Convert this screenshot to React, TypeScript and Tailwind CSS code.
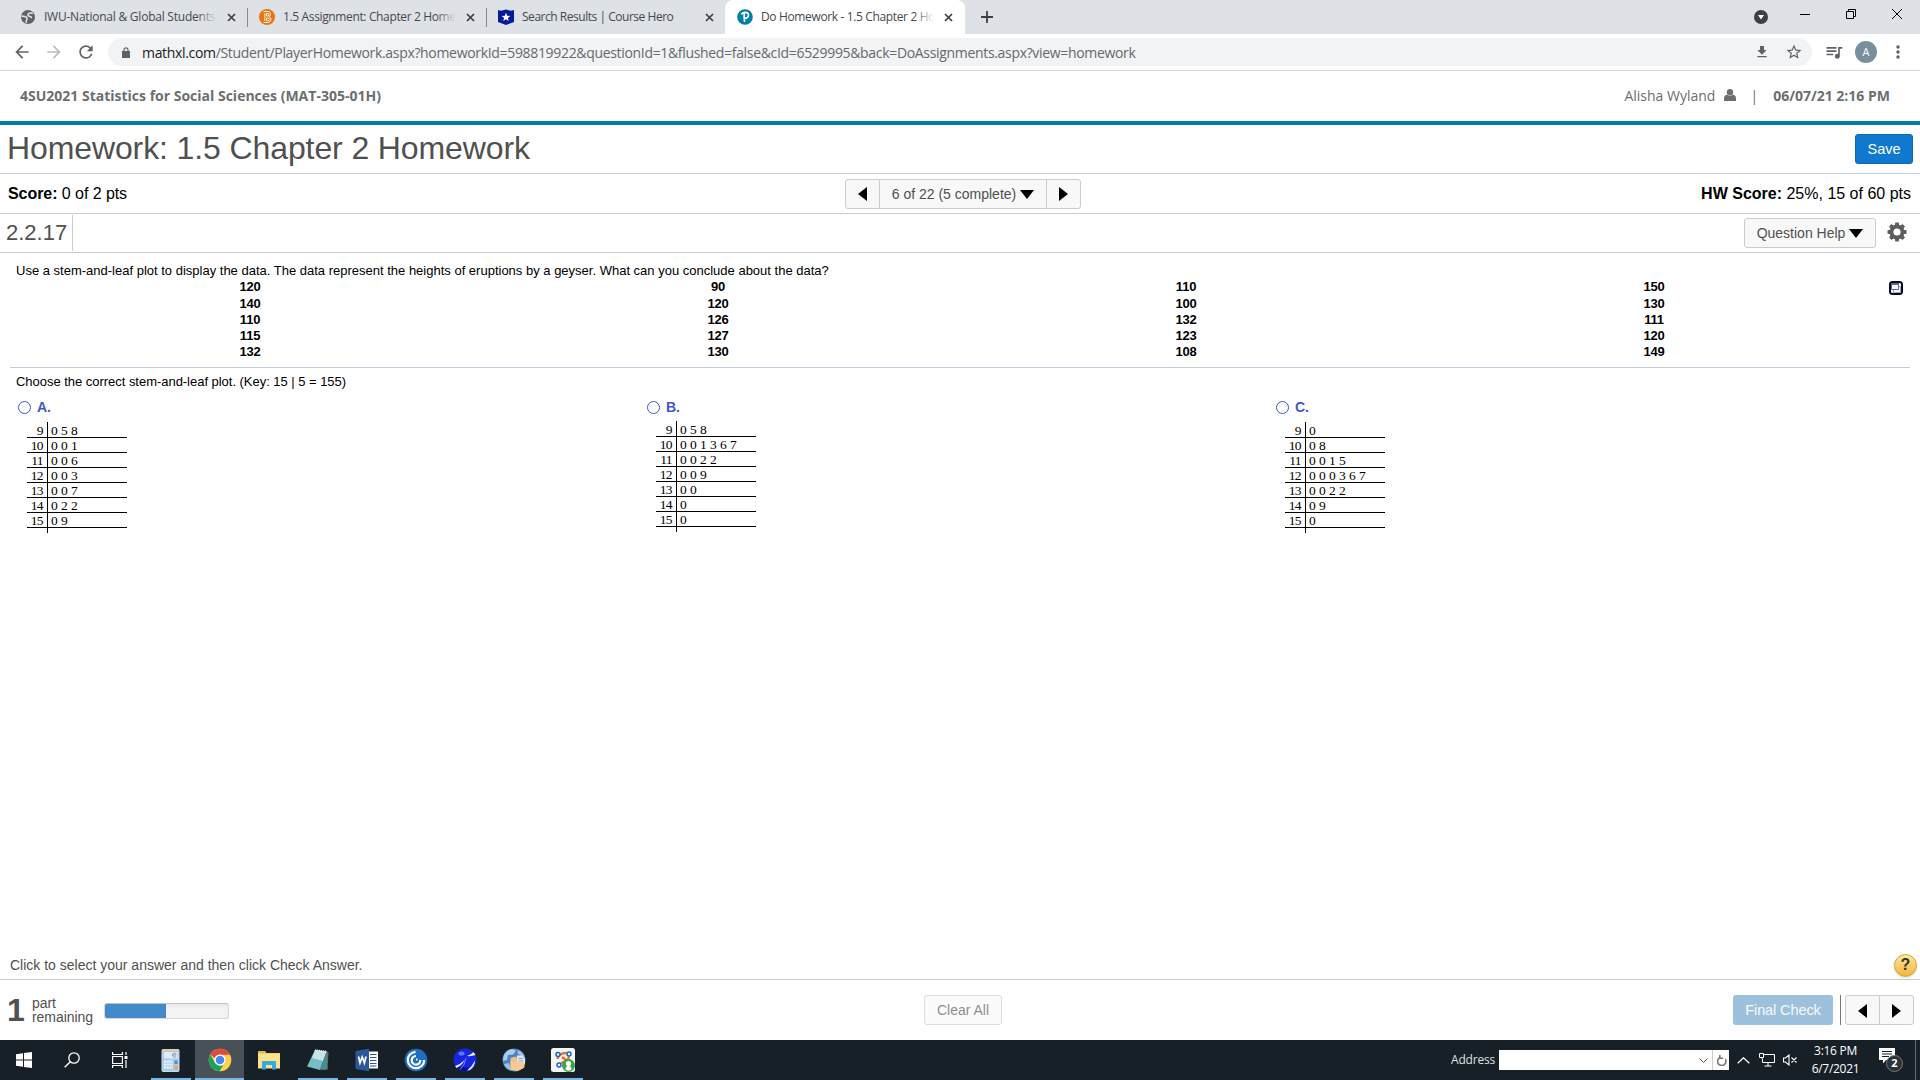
import React from 'react';
import { MdDownload, MdStarBorder, MdQueueMusic, MdMoreVert, MdRefresh, MdArrowBack, MdArrowForward } from 'react-icons/md';

const UI = 'font-["Open_Sans",sans-serif]';

function Close({ className = '' }: { className?: string }) {
  return (
    <svg className={`size-[9px] shrink-0 ${className}`} viewBox="0 0 9 9">
      <path d="M1 1L8 8M8 1L1 8" stroke="#3c4043" strokeWidth="1.7" />
    </svg>
  );
}

function TabTitle({ children, fade, tracking }: { children: React.ReactNode; fade: string; tracking: string }) {
  return (
    <div className={`relative ml-2 w-[173px] overflow-hidden text-[12px] leading-[16px] whitespace-nowrap text-[#45494d] ${tracking}`}>
      {children}
      <div className={`absolute inset-y-0 right-0 w-5 bg-gradient-to-r from-transparent ${fade}`} />
    </div>
  );
}

function Globe() {
  return (
    <svg className="size-4" viewBox="0 0 16 16">
      <circle cx="8" cy="8" r="7" fill="#5f6368" />
      <path d="M13 4.200c-2 .3-2.500-.7-4.200.2-1.500 1-.8 2.800.8 2.800 1.200 0 1.200 1.300 2.400 1.300M1.500 7.200c1.300-.2 2.500.2 3.800.5 1.500.5 2.200 1.200 1.500 2.600-.4 1-.8 2-.5 3.500" fill="none" stroke="#dee1e6" strokeWidth="1.600" />
    </svg>
  );
}

function BrightIcon() {
  return (
    <svg className="size-4" viewBox="0 0 16 16">
      <circle cx="8" cy="8" r="8" fill="#e87511" />
      <path d="M4.500 2.500h4.500c3 0 3.200 4 1 5.200 3 1 2.400 5.800-1.200 5.800h-4.300M5.800 4.300v7.700M7.500 4.500h1.500c1.400 0 1.400 2.500 0 2.500h-1.500zM7.500 9h1.700c1.500 0 1.500 2.800 0 2.800h-1.700z" fill="none" stroke="#fff" strokeWidth=".9" />
    </svg>
  );
}

function HeroIcon() {
  return (
    <svg className="size-4" viewBox="0 0 16 16">
      <path d="M0 1l3 .8L8 .5l5 1.300 3-.8v12l-8 3-8-3z" fill="#061b9c" />
      <path d="M8 3.800l1.200 2.900 3.100.2-2.400 2 .8 3L8 10.200l-2.700 1.700.8-3-2.400-2 3.100-.2z" fill="#fff" />
    </svg>
  );
}

function PearsonIcon() {
  return (
    <svg className="size-4" viewBox="0 0 16 16">
      <circle cx="8" cy="8" r="7.800" fill="#007fa3" />
      <path d="M4.500 5.500C5.500 3 11.500 2.300 11.500 6c0 2.600-2.500 3.500-4 3.100M7.300 4.200c-.4 3-.3 5.500.3 8.600" fill="none" stroke="#fff" strokeWidth="1.700" />
    </svg>
  );
}

function TabStrip() {
  return (
    <div className={`flex h-[34px] bg-[#dee1e6] ${UI}`}>
      <div className="flex w-[247px] items-center pl-5">
        <Globe />
        <TabTitle fade="to-[#dee1e6]" tracking="tracking-[-0.23px]">IWU-National &amp; Global Students</TabTitle>
        <Close className="ml-[10px]" />
      </div>
      <div className="mt-[8px] h-[19px] w-px bg-[#858a8f]" />
      <div className="flex w-[238px] items-center pl-[11px]">
        <BrightIcon />
        <TabTitle fade="to-[#dee1e6]" tracking="tracking-[-0.36px]">1.5 Assignment: Chapter 2 Home</TabTitle>
        <Close className="ml-[10px]" />
      </div>
      <div className="mt-[8px] h-[19px] w-px bg-[#858a8f]" />
      <div className="flex w-[238px] items-center pl-[11px]">
        <HeroIcon />
        <TabTitle fade="to-[#dee1e6]" tracking="tracking-[-0.47px]">Search Results | Course Hero</TabTitle>
        <Close className="ml-[10px]" />
      </div>
      <div className="flex w-[240px] items-center rounded-t-lg bg-white pl-3">
        <PearsonIcon />
        <TabTitle fade="to-white" tracking="tracking-[-0.36px]">Do Homework - 1.5 Chapter 2 Ho</TabTitle>
        <Close className="ml-[10px]" />
      </div>
      <svg className="mt-[11px] ml-[16px] size-3" viewBox="0 0 12 12">
        <path d="M6 0v12M0 6h12" stroke="#3c4043" strokeWidth="1.800" />
      </svg>
      <div className="ml-auto flex">
        <svg className="mt-[10px] size-[14px]" viewBox="0 0 14 14">
          <circle cx="7" cy="7" r="7" fill="#3c4043" />
          <path d="M4 5h6L7 9.500z" fill="#fff" />
        </svg>
        <div className="mt-[14px] ml-[32px] h-px w-[10px] bg-black" />
        <svg className="mt-[9px] ml-[36px] size-[10px]" viewBox="0 0 10 10">
          <path d="M.5 2.500h7v7h-7zM2.500 2.500v-2h7v7h-2" fill="none" stroke="#000" />
        </svg>
        <svg className="mt-[9px] mr-[18px] ml-[36px] size-[10px]" viewBox="0 0 10 10">
          <path d="M0 0L10 10M10 0L0 10" stroke="#000" />
        </svg>
      </div>
    </div>
  );
}

function Toolbar() {
  return (
    <div className={`flex h-[37px] items-center border-b border-[#d6d7da] bg-white ${UI}`}>
      <MdArrowBack className="ml-[12px] size-5 text-[#5f6368]" />
      <MdArrowForward className="ml-[12px] size-5 text-[#babcbe]" />
      <MdRefresh className="ml-[12px] size-5 text-[#5f6368]" />
      <div className="ml-[12px] flex h-7 w-[1704px] items-center rounded-full bg-[#f1f3f4]">
        <svg className="ml-[14px] h-[11px] w-2" viewBox="0 0 8 11">
          <path d="M0 4h8v7H0z" fill="#5f6368" />
          <path d="M2 4.500V2.800a2 2 0 0 1 4 0V4.500" fill="none" stroke="#5f6368" strokeWidth="1.200" />
        </svg>
        <div className="ml-[12px] text-[14px] tracking-[-0.325px] whitespace-nowrap text-[#66696d]">
          <span className="text-[#202124]">mathxl.com</span>
          /Student/PlayerHomework.aspx?homeworkId=598819922&amp;questionId=1&amp;flushed=false&amp;cId=6529995&amp;back=DoAssignments.aspx?view=homework
        </div>
        <MdDownload className="ml-auto size-4 text-[#5f6368]" />
        <MdStarBorder className="mr-[9px] ml-[15px] size-[18px] text-[#5f6368]" />
      </div>
      <MdQueueMusic className="ml-[12px] size-5 text-[#5f6368]" />
      <div className="ml-[11px] flex size-[22px] items-center justify-center rounded-full bg-[#78909c] text-[11px] text-white">A</div>
      <MdMoreVert className="ml-[11px] size-5 text-[#5f6368]" />
    </div>
  );
}

function Triangle({ dir }: { dir: 'left' | 'right' | 'down' }) {
  if (dir === 'down')
    return (
      <svg className="mt-px h-[9px] w-[14px] shrink-0" viewBox="0 0 14 9">
        <path d="M0 0H14L7 9z" />
      </svg>
    );
  return (
    <svg className="h-[14px] w-[9px] shrink-0" viewBox="0 0 9 14">
      <path d={dir === 'left' ? 'M9 0V14L0 7z' : 'M0 0V14L9 7z'} />
    </svg>
  );
}

function Gear() {
  return (
    <svg className="mb-[2px] ml-[11px] size-5" viewBox="0 0 20 20">
      <circle cx="10" cy="10" r="5.500" fill="none" stroke="#5d5d5d" strokeWidth="3.800" />
      {[0, 45, 90, 135, 180, 225, 270, 315].map((a) => (
        <path key={a} d="M7.700 4L8.300.5h3.400L12.300 4z" fill="#5d5d5d" transform={`rotate(${a} 10 10)`} />
      ))}
    </svg>
  );
}

const columns = [
  [120, 140, 110, 115, 132],
  [90, 120, 126, 127, 130],
  [110, 100, 132, 123, 108],
  [150, 130, 111, 120, 149],
];

const plots = [
  { label: 'A.', pad: 'pt-[7px]', leaves: ['058', '001', '006', '003', '007', '022', '09'] },
  { label: 'B.', pad: 'pt-[6px]', leaves: ['058', '001367', '0022', '009', '00', '0', '0'] },
  { label: 'C.', pad: 'pt-[7px]', leaves: ['0', '08', '0015', '000367', '0022', '09', '0'] },
];

function StemLeaf({ leaves }: { leaves: string[] }) {
  return (
    <div className="relative ml-[17px] w-[100px] pt-px pb-[5px] font-['Liberation_Serif',serif] text-[13.5px] leading-[14px] text-black">
      {leaves.map((row, i) => (
        <div key={i} className="flex h-[15px] border-b border-black pt-px">
          <div className="w-4 text-right tracking-[-0.6px]">{9 + i}</div>
          <div className="ml-2 flex tracking-[-0.5px]">
            {row.split('').map((d, j) => (
              <span key={j} className="w-[10px]">{d}</span>
            ))}
          </div>
        </div>
      ))}
      <div className="absolute inset-y-0 left-5 w-px bg-black" />
    </div>
  );
}

function Homework() {
  return (
    <div className="flex h-[969px] flex-col bg-white font-['Liberation_Sans',Arial,sans-serif] text-black">
      <div className={`flex h-[50px] items-center pr-[30px] pb-[2px] pl-5 text-[14px] text-[#6a7070] ${UI}`}>
        <div className="font-bold">4SU2021 Statistics for Social Sciences (MAT-305-01H)</div>
        <div className="ml-auto">Alisha Wyland</div>
        <svg className="ml-[9px] size-3" viewBox="0 0 12 12" fill="#6a7070">
          <circle cx="6" cy="3.200" r="3.200" />
          <path d="M0 12V9.500C0 7 1.500 6 3 5.800c2 1.400 4 1.400 6 0 1.500.2 3 1.200 3 3.700V12z" />
        </svg>
        <div className="ml-[14px]">|</div>
        <div className="ml-[15px] font-bold">06/07/21 2:16 PM</div>
      </div>
      <div className="h-1 bg-[#007fa3]" />
      <div className="flex h-[49px] items-center border-b border-[#c7cadc] pr-[7px] pl-[7px]">
        <h1 className="pb-[2px] text-[32px] leading-[36px] tracking-[-0.11px] whitespace-nowrap text-[#505050]">Homework: 1.5 Chapter 2 Homework</h1>
        <button className="ml-auto h-[30px] w-[58px] rounded-[3px] border border-[#0b69b5] bg-[#0f79d0] pt-px text-[14.5px] text-white">Save</button>
      </div>
      <div className="grid h-10 grid-cols-[837px_236px_1fr] items-center border-b border-[#c7cadc] pr-[9px] pl-[8px] text-[16px]">
        <div className="tracking-[-0.06px]"><b>Score:</b> 0 of 2 pts</div>
        <div className="flex h-[30px] rounded-[3px] border border-[#ccc] bg-[#f8f8f8] text-[14px]">
          <div className="flex w-[34px] items-center justify-center border-r border-[#ccc] pt-px"><Triangle dir="left" /></div>
          <div className="flex grow items-center justify-center gap-1 pt-px"><span className="text-[#505050]">6 of 22 (5 complete)</span><Triangle dir="down" /></div>
          <div className="flex w-[34px] items-center justify-center border-l border-[#ccc] pt-px"><Triangle dir="right" /></div>
        </div>
        <div className="text-right"><b>HW Score:</b> 25%, 15 of 60 pts</div>
      </div>
      <div className="flex h-[39px] items-center border-b border-[#c7cadc] pr-[13px]">
        <div className="flex h-9 w-[73px] items-center border-r border-[#c7cadc] pb-[2px] pl-[6px] text-[22px] text-[#505050]">2.2.17</div>
        <button className="ml-auto flex h-[30px] w-[132px] items-center justify-center gap-1 rounded-[3px] border border-[#ccc] bg-[#f8f8f8] text-[14px]">
          <span className="text-[#505050]">Question Help</span><Triangle dir="down" />
        </button>
        <Gear />
      </div>
      <div className="pt-[10px] pl-4 text-[13px] leading-[16px]">Use a stem-and-leaf plot to display the data. The data represent the heights of eruptions by a geyser. What can you conclude about the data?</div>
      <div className="mx-[10px] flex h-[89px] border-b border-[#c7cadc] pl-[6px] text-[13px] leading-[16px] font-bold tracking-[-0.2px]">
        {columns.map((c, i) => (
          <div key={i} className="w-[468px] shrink-0 text-center">
            {c.map((v, j) => <div key={j} className="h-4 first:h-[17px]">{v}</div>)}
          </div>
        ))}
        <svg className="mt-[2px] ml-px size-[14px] shrink-0" viewBox="0 0 14 14">
          <rect x="1" y="1" width="12" height="12" rx="2.500" fill="#fff" stroke="#0c0c18" strokeWidth="2" />
          <path d="M4.500 9v2.500h7V5.500H10" fill="none" stroke="#a3a8da" />
          <path d="M2.500 3v5.500h7V3" fill="none" stroke="#5961b5" />
          <path d="M2 2h8v2H2z" fill="#5961b5" />
        </svg>
      </div>
      <div className="pt-[6px] pl-4 text-[13px] leading-[16px] tracking-[-0.03px]">Choose the correct stem-and-leaf plot. (Key: 15 | 5 = 155)</div>
      <div className="flex pt-[9px] pl-[10px]">
        {plots.map((p) => (
          <div key={p.label} className="w-[629px]">
            <div className="flex h-4 items-center gap-[6px] pl-2">
              <div className="size-[13px] rounded-full border border-[#3d55cc]" />
              <span className="text-[14px] font-bold text-[#4059c9]">{p.label}</span>
            </div>
            <div className={p.pad}><StemLeaf leaves={p.leaves} /></div>
          </div>
        ))}
      </div>
      <div className="mt-auto flex h-[29px] items-center border-b border-[#c7cadc] pr-[3px] pl-[10px] text-[14px] text-[#505050]">
        Click to select your answer and then click Check Answer.
        <div className="ml-auto flex size-[23px] items-center justify-center rounded-full border border-[#c9a64a] bg-gradient-to-b from-[#ffe693] to-[#f2b535] text-[16px] font-bold text-[#333] shadow-sm">?</div>
      </div>
      <div className="flex h-[60px] shrink-0 items-center pr-[6px] text-[#505050]">
        <div className="w-8 pl-[7px] text-[32px] leading-[32px] font-bold">1</div>
        <div className="w-[72px] text-[14px] leading-[14px] tracking-[-0.05px]">part<br />remaining</div>
        <div className="mt-[2px] h-4 w-[125px] overflow-hidden rounded-[3px] border border-[#d8d8d8] border-t-[#c0c0c0] bg-[#f4f4f4] shadow-inner">
          <div className="-mt-px -ml-px h-4 w-[62px] bg-[#428bca]" />
        </div>
        <button className="ml-[695px] h-[30px] w-[78px] rounded-[3px] border border-[#ddd] bg-[#fbfbfb] text-[14px] text-[#8f8f8f]">Clear All</button>
        <button className="ml-auto h-[30px] w-[100px] rounded-[3px] bg-[#9dc0dc] pt-px text-[14.5px] tracking-[-0.1px] text-white/90">Final Check</button>
        <div className="ml-[7px] h-[30px] w-px bg-[#777]" />
        <div className="ml-[4px] flex h-[30px] w-[69px] rounded-[3px] border border-[#ccc] bg-[#f8f8f8] text-black">
          <div className="flex w-[34px] items-center justify-center border-r border-[#ccc] pt-px"><Triangle dir="left" /></div>
          <div className="flex grow items-center justify-center pt-px"><Triangle dir="right" /></div>
        </div>
      </div>
    </div>
  );
}

function TaskbarApp({ children, open = true, active = false }: { children: React.ReactNode; open?: boolean; active?: boolean }) {
  return (
    <div className={`flex h-10 w-[49px] flex-col items-center ${active ? 'bg-[#485157]' : ''}`}>
      <svg className="mt-[8px] size-6" viewBox="0 0 24 24">{children}</svg>
      <div className={`mt-[6px] h-[2px] ${active ? 'w-full' : 'w-10'} ${open ? 'bg-[#76b9ed]' : ''}`} />
    </div>
  );
}

function Taskbar() {
  return (
    <div className={`flex h-10 bg-[#182027] text-white ${UI}`}>
      <div className="flex w-[146px] items-center">
        <svg className="ml-4 size-4" viewBox="0 0 16 16"><path d="M0 2.300L7 1.300v6.200H0zM8 1.100L16 0v7.500H8zM0 8.500h7v6.200L0 13.700zM8 8.500h8V16L8 14.900z" fill="#fff" /></svg>
        <svg className="ml-8 size-4" viewBox="0 0 16 16"><path d="M6.300 9.700L.7 15.300" stroke="#fff" strokeWidth="1.400" /><circle cx="10" cy="6" r="5.200" fill="none" stroke="#fff" strokeWidth="1.300" /></svg>
        <svg className="ml-8 size-4" viewBox="0 0 16 16"><path d="M.6 0v2.500h9.800V0M.6 4.500h9.800v7H.6zM.6 16v-2.500h9.800V16M14 0v3M14 8v8" fill="none" stroke="#fff" strokeWidth="1.200" /><path d="M12.500 4h3v3h-3z" fill="#fff" /></svg>
      </div>
      <TaskbarApp>
        <rect x="3" y="1.500" width="17" height="22" rx="1" fill="#a9cbe6" stroke="#c4dcf0" />
        <path d="M3.500 1.500h16v1.500h-16z" fill="#f3c77c" />
        <rect x="5" y="4" width="13.500" height="6.500" fill="#dcebf7" />
        <path d="M13.500 7h3.500c0-2.500-3.500-2.500-3.500 0s2.500 2.500 3.500 1.500" fill="none" stroke="#7a95b5" />
        <path d="M5 13.500h9M5 16.500h9M5 19.500h9" stroke="#f5faff" strokeWidth="1.800" strokeDasharray="2 .8" />
        <path d="M15.500 12.500h3v3.500h-3z" fill="#3d93d6" /><path d="M15.500 17.500h3v4h-3z" fill="#f0a640" />
      </TaskbarApp>
      <TaskbarApp active>
        <circle cx="12" cy="12" r="11.300" fill="#fdd04f" />
        <path d="M2.200 6.300A11.300 11.300 0 0 1 22 6.700H12a5.800 5.800 0 0 0-5.300 3.600z" fill="#df4a3c" />
        <path d="M2.200 6.300L7 15l5 2.700 3.300-.4L11.500 23.300A11.300 11.300 0 0 1 2.200 6.300z" fill="#1fa15d" />
        <circle cx="12" cy="12" r="5.600" fill="#fff" /><circle cx="12" cy="12" r="4.300" fill="#4587f3" />
      </TaskbarApp>
      <TaskbarApp open={false}>
        <path d="M1 3h7l1.500 2H23v3H1z" fill="#e9b84a" /><path d="M1 5.500h22v15H1z" fill="#fde28e" />
        <path d="M5 21.500V14q0-1 1-1h12q1 0 1 1v7.500h-4V17H9v4.500z" fill="#35aae1" />
      </TaskbarApp>
      <TaskbarApp>
        <path d="M20 3l2.500 1.500L21.500 21.500 17 22z" fill="#6f6d58" />
        <path d="M9 2L20.500 3.500 14 22 1 18.500z" fill="#78bcc4" /><path d="M9 2L20.500 3.500 17 13 6 10z" fill="#c5e6e8" /><path d="M14 22L20.500 3.500 21.300 21z" fill="#4e8a94" />
        <path d="M9 2l12 1.700" stroke="#e6efef" strokeWidth="1.600" strokeDasharray="1.200 .8" />
      </TaskbarApp>
      <TaskbarApp>
        <path d="M12 3.500h11v17H12z" fill="#fff" /><path d="M15 6.500h6.500M15 9.500h6.500M15 12.500h6.500M15 15.500h6.500M15 18h6.500" stroke="#2b579a" strokeWidth="1.200" />
        <path d="M.5 3L14 .8v22.500L.5 21z" fill="#2b579a" /><path d="M3.500 8.500l1.500 6.500 2.200-6 2.200 6 1.600-6.500" fill="none" stroke="#fff" strokeWidth="1.700" />
      </TaskbarApp>
      <TaskbarApp>
        <circle cx="12" cy="12" r="11.300" fill="#1f6fc0" />
        <path d="M11.500 3.800A8.200 8.200 0 1 0 20.200 12M12 8A4.300 4.300 0 1 0 16.300 12" fill="none" stroke="#fff" strokeWidth="2.200" />
        <path d="M12 11.500h1.500" stroke="#fff" strokeWidth="2" />
      </TaskbarApp>
      <TaskbarApp>
        <circle cx="12" cy="12" r="11.500" fill="#1626e0" />
        <path d="M1.500 17Q4 23 11 23.400 17 23 20 19 11 21 1.500 17z" fill="#0a0f86" />
        <path d="M14 8Q18.500 6.500 20.500 4L22.500 7Q18.500 8.500 14 8zM2 18Q8 16 11.500 12 9 17.500 3.500 20zM14 22.500Q19.500 18 22 12.500 22 18.500 17 22z" fill="#e6ecff" />
        <path d="M7 21.500Q12 17 13 10" stroke="#6f86ff" fill="none" />
        <ellipse cx="8.500" cy="5.500" rx="3" ry="2" fill="#5f7bff" />
      </TaskbarApp>
      <TaskbarApp>
        <circle cx="12" cy="12" r="11.500" fill="#4a82c4" />
        <path d="M1.500 8Q4 2 10 1l4 1.500-3 4-5 .5-1 5-4 1z" fill="#a8cdea" /><path d="M16 2q5 2 6.500 7l-4-1-3-3zM2 16l5-1 2 7q-5-1-7-6z" fill="#9fc3e4" />
        <path d="M8.500 10l5-1.500 2 2 7 1v8l-7 3.500-7-1z" fill="#f3bd83" /><path d="M15 7.500h5.500l2.500 3v6l-8 .5z" fill="#dfe6ec" /><path d="M16.500 10.500h4.500M16.500 13h4.500" stroke="#8ba3b8" />
        <path d="M8.500 13l7 1.500 6.500 0-1 6-5.500 2.500-7-1.500z" fill="#f6c896" />
      </TaskbarApp>
      <TaskbarApp>
        <rect width="24" height="24" rx="2.500" fill="#f4f6f8" />
        <path d="M6.500 11q1-6 9-6M18 8.500q-1 5-8 6.500M11 9l5 4" fill="none" stroke="#f36d21" strokeWidth="2.400" />
        <circle cx="7" cy="6.500" r="2" fill="#fff" stroke="#1c63d7" strokeWidth="1.500" /><circle cx="18" cy="6" r="2" fill="#fff" stroke="#1c63d7" strokeWidth="1.500" /><circle cx="8" cy="17" r="2" fill="#fff" stroke="#1c63d7" strokeWidth="1.500" />
        <circle cx="17.500" cy="17.500" r="6.500" fill="#3aa648" /><circle cx="17.500" cy="15.500" r="2.600" fill="#fff" /><path d="M14.500 21.500c0-5 6-5 6 0-2 1.500-4 1.500-6 0z" fill="#fff" />
      </TaskbarApp>
      <div className="ml-auto flex items-center">
        <div className="w-12 text-[12px] tracking-[-0.2px] text-[#dfe1e2]">Address</div>
        <div className="flex h-5 w-[230px] items-center justify-end bg-white">
          <svg className="mr-[4px] h-[5px] w-[9px]" viewBox="0 0 9 5"><path d="M.5.5l4 4 4-4" fill="none" stroke="#555" /></svg>
          <div className="h-5 w-px bg-[#ccc]" />
          <svg className="mr-[2px] ml-[4px] h-[11px] w-[10px]" viewBox="0 0 10 11"><path d="M3 2.500A4.200 4.200 0 1 0 8.300 4M2.800 0v3.300h3.400" fill="none" stroke="#777" strokeWidth="1.600" /></svg>
        </div>
        <svg className="ml-2 h-[7px] w-[13px]" viewBox="0 0 13 7"><path d="M.7 6.300L6.500.8l5.800 5.500" fill="none" stroke="#fff" strokeWidth="1.300" /></svg>
        <svg className="ml-[9px] h-[14px] w-4" viewBox="0 0 16 14"><path d="M5 1.500h10.500v8H3.500V5.500M9 9.500v3.500M5.500 13h7M.5.500h4v4h-4zM2.500 4.500v1" fill="none" stroke="#fff" /></svg>
        <svg className="ml-[8px] h-3 w-[14px]" viewBox="0 0 14 12"><path d="M.5 4v4h2l3.500 3V1L2.500 4zM8.500 3.500l5 5M13.500 3.500l-5 5" fill="none" stroke="#fff" strokeWidth="1.100" /></svg>
        <div className="ml-[12px] w-[53px] text-center text-[12px] leading-[18px] tracking-[-0.3px]">3:16 PM<br />6/7/2021</div>
        <div className="relative ml-[17px] size-6">
          <svg className="size-4" viewBox="0 0 16 16"><path d="M0 0h16v12H7l-3 3.500V12H0z" fill="#fff" /><path d="M3 3.500h10M3 6h10M3 8.500h7" stroke="#182027" /></svg>
          <div className="absolute top-[7px] left-[7px] flex size-[17px] items-center justify-center rounded-full border border-[#777] bg-[#2c3338] text-[11px] font-bold">2</div>
        </div>
        <div className="ml-3 h-10 w-px bg-[#646a6f]" />
        <div className="w-1" />
      </div>
    </div>
  );
}

export default function App() {
  return (
    <div className="h-[1080px] w-[1920px] overflow-hidden bg-white">
      <TabStrip />
      <Toolbar />
      <Homework />
      <Taskbar />
    </div>
  );
}
